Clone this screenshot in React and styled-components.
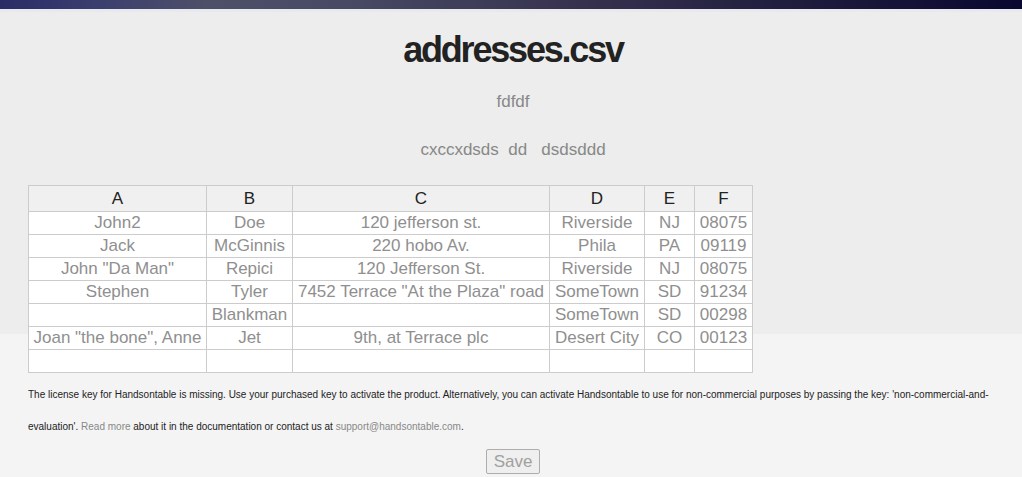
import React from "react";
import styled, { createGlobalStyle } from "styled-components";

const Global = createGlobalStyle`
  html, body { margin: 0; padding: 0; }
  body {
    font-family: "Liberation Sans", Arial, sans-serif;
    background: linear-gradient(to bottom, #ecedec 0, #ecedec 334px, #f4f4f4 334px, #f4f4f4 100%);
    min-height: 477px;
  }
`;

const TopBar = styled.div`
  height: 9px;
  background: linear-gradient(to right, #2a2c67 0%, #3b3f6e 10%, #4e5068 20%, #474862 35%, #38344f 55%, #231f40 75%, #0a0730 100%);
  border-bottom: 3px solid #e7e9ee;
`;

const Page = styled.div`
  padding: 0 24px 0 28px;
`;

const Title = styled.h1`
  margin: 18px 0 0;
  text-align: center;
  font-size: 36px;
  line-height: 40px;
  font-weight: bold;
  letter-spacing: -2.2px;
  color: #222;
`;

const Note = styled.p`
  margin: ${(p) => p.$top}px 0 0;
  text-align: center;
  font-size: 17px;
  line-height: 20px;
  color: #888;
  white-space: pre;
`;

const Table = styled.table`
  margin-top: 25px;
  border-collapse: separate;
  border-spacing: 0;
  table-layout: fixed;
  width: 725px;
`;

const Head = styled.th`
  box-sizing: border-box;
  width: ${(p) => p.$w}px;
  height: 27px;
  padding: 0;
  font-weight: normal;
  font-size: 17px;
  color: #222;
  background: #f0f0f0;
  border-top: 1px solid #ccc;
  border-right: 1px solid #ccc;
  border-bottom: 1px solid #ccc;
  border-left: ${(p) => (p.$first ? "1px solid #ccc" : "none")};
  text-align: center;
`;

const Cell = styled.td`
  box-sizing: border-box;
  height: 23px;
  padding: 0 4px;
  font-size: 17px;
  line-height: 22px;
  color: #8f8f8f;
  background: #fff;
  border-right: 1px solid #ccc;
  border-bottom: 1px solid #ccc;
  border-left: ${(p) => (p.$first ? "1px solid #ccc" : "none")};
  text-align: center;
  white-space: nowrap;
  overflow: hidden;
`;

const License = styled.div`
  margin-top: 6px;
  font-size: 10px;
  line-height: 32px;
  color: #222;
`;

const Link = styled.a`
  color: #888;
  text-decoration: none;
`;

const Actions = styled.div`
  margin-top: 6px;
  display: flex;
  justify-content: center;
`;

const SaveButton = styled.button`
  height: 25px;
  width: 54px;
  padding: 0;
  font-family: "Liberation Sans", Arial, sans-serif;
  font-size: 17px;
  color: #a0a0a0;
  background: #efefef;
  border: 1px solid #adadad;
  border-radius: 2px;
`;

const columns = [
  { key: "A", w: 179 },
  { key: "B", w: 86 },
  { key: "C", w: 257 },
  { key: "D", w: 95 },
  { key: "E", w: 50 },
  { key: "F", w: 58 },
];

const rows = [
  ["John2", "Doe", "120 jefferson st.", "Riverside", "NJ", "08075"],
  ["Jack", "McGinnis", "220 hobo Av.", "Phila", "PA", "09119"],
  ['John "Da Man"', "Repici", "120 Jefferson St.", "Riverside", "NJ", "08075"],
  ["Stephen", "Tyler", '7452 Terrace "At the Plaza" road', "SomeTown", "SD", "91234"],
  ["", "Blankman", "", "SomeTown", "SD", "00298"],
  ['Joan "the bone", Anne', "Jet", "9th, at Terrace plc", "Desert City", "CO", "00123"],
  ["", "", "", "", "", ""],
];

export default function App() {
  return (
    <>
      <Global />
      <TopBar />
      <Page>
        <Title>addresses.csv</Title>
        <Note $top={22}>fdfdf</Note>
        <Note $top={28}>{"cxccxdsds  dd   dsdsddd"}</Note>
        <Table>
          <thead>
            <tr>
              {columns.map((c, i) => (
                <Head key={c.key} $w={c.w} $first={i === 0}>
                  {c.key}
                </Head>
              ))}
            </tr>
          </thead>
          <tbody>
            {rows.map((r, ri) => (
              <tr key={ri}>
                {r.map((v, ci) => (
                  <Cell key={ci} $first={ci === 0}>
                    {v}
                  </Cell>
                ))}
              </tr>
            ))}
          </tbody>
        </Table>
        <License>
          The license key for Handsontable is missing. Use your purchased key to activate the product. Alternatively, you can activate Handsontable to use for non-commercial purposes by passing the key: 'non-commercial-and-evaluation'.{" "}
          <Link href="#">Read more</Link> about it in the documentation or contact us at{" "}
          <Link href="#">support@handsontable.com</Link>.
        </License>
        <Actions>
          <SaveButton>Save</SaveButton>
        </Actions>
      </Page>
    </>
  );
}
